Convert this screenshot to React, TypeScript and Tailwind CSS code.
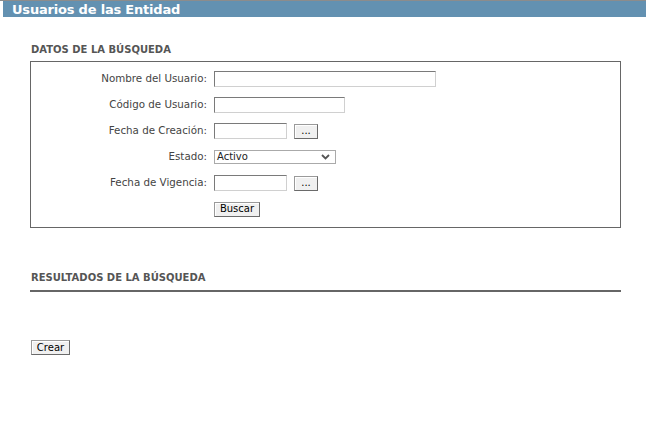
import React from 'react';

const font = { fontFamily: '"DejaVu Sans", Verdana, sans-serif' };

const TextBox = ({ w }: { w: string }) => (
    <input
        type="text"
        className={`${w} h-[16px] bg-white border border-t-[#7a7a7a] border-l-[#7a7a7a] border-b-[#d0d0d0] border-r-[#d0d0d0] outline-none`}
    />
);

const Btn = ({ label, w }: { label: string; w: string }) => (
    <button
        type="button"
        className={`${w} h-[15px] flex items-center justify-center bg-[#f0f0f0] border border-[#6a6a6a] border-t-[#9a9a9a] border-l-[#9a9a9a] shadow-[inset_1px_1px_0_#ffffff] text-[10px] leading-none text-black`}
    >
        {label}
    </button>
);

const Row = ({ label, children }: { label: string; children: React.ReactNode }) => (
    <div className="flex items-center h-[16px]">
        <div className="w-[183px] pr-[7px] text-right text-[10.3px] text-[#444] whitespace-nowrap">{label}</div>
        <div className="flex items-center gap-[7px]">{children}</div>
    </div>
);

export default function App() {
    return (
        <div className="w-[646px] h-[432px] bg-white overflow-hidden" style={font}>
            {/* Title bar */}
            <div className="border-t border-[#8c8c8c]">
                <div className="ml-[3px] h-[16px] bg-[#6391b1] flex items-center pl-[9px]">
                    <h1 className="text-[13px] font-bold text-white leading-none tracking-[-0.2px]">
                        Usuarios de las Entidad
                    </h1>
                </div>
            </div>

            <div className="ml-[30px] w-[591px]">
                {/* Search criteria */}
                <h2 className="mt-[26px] mb-[5px] h-[13px] pl-[1px] text-[10px] font-bold text-[#555] leading-[13px]">
                    DATOS DE LA BÚSQUEDA
                </h2>
                <div className="h-[167px] border border-[#666] pt-[9px] flex flex-col gap-[10px]">
                    <Row label="Nombre del Usuario:">
                        <TextBox w="w-[222px]" />
                    </Row>
                    <Row label="Código de Usuario:">
                        <TextBox w="w-[131px]" />
                    </Row>
                    <Row label="Fecha de Creación:">
                        <TextBox w="w-[73px]" />
                        <Btn label="..." w="w-[24px]" />
                    </Row>
                    <Row label="Estado:">
                        <div className="w-[122px] h-[14px] border border-[#aaa] bg-white flex items-center justify-between pl-[2px] pr-[5px]">
                            <span className="text-[10px] text-[#222] leading-none">Activo</span>
                            <svg width="9" height="6" viewBox="0 0 9 6">
                                <path d="M1 1 L4.5 4.5 L8 1" fill="none" stroke="#555" strokeWidth="1.8" />
                            </svg>
                        </div>
                    </Row>
                    <Row label="Fecha de Vigencia:">
                        <TextBox w="w-[73px]" />
                        <Btn label="..." w="w-[24px]" />
                    </Row>
                    <Row label="">
                        <Btn label="Buscar" w="w-[46px]" />
                    </Row>
                </div>

                {/* Results */}
                <div className="mt-[43px] border-b-2 border-[#666] pb-[6px] pl-[1px]">
                    <h2 className="h-[13px] text-[10px] font-bold text-[#555] leading-[13px]">
                        RESULTADOS DE LA BÚSQUEDA
                    </h2>
                </div>

                <div className="mt-[48px] pl-[1px]">
                    <Btn label="Crear" w="w-[39px]" />
                </div>
            </div>
        </div>
    );
}
